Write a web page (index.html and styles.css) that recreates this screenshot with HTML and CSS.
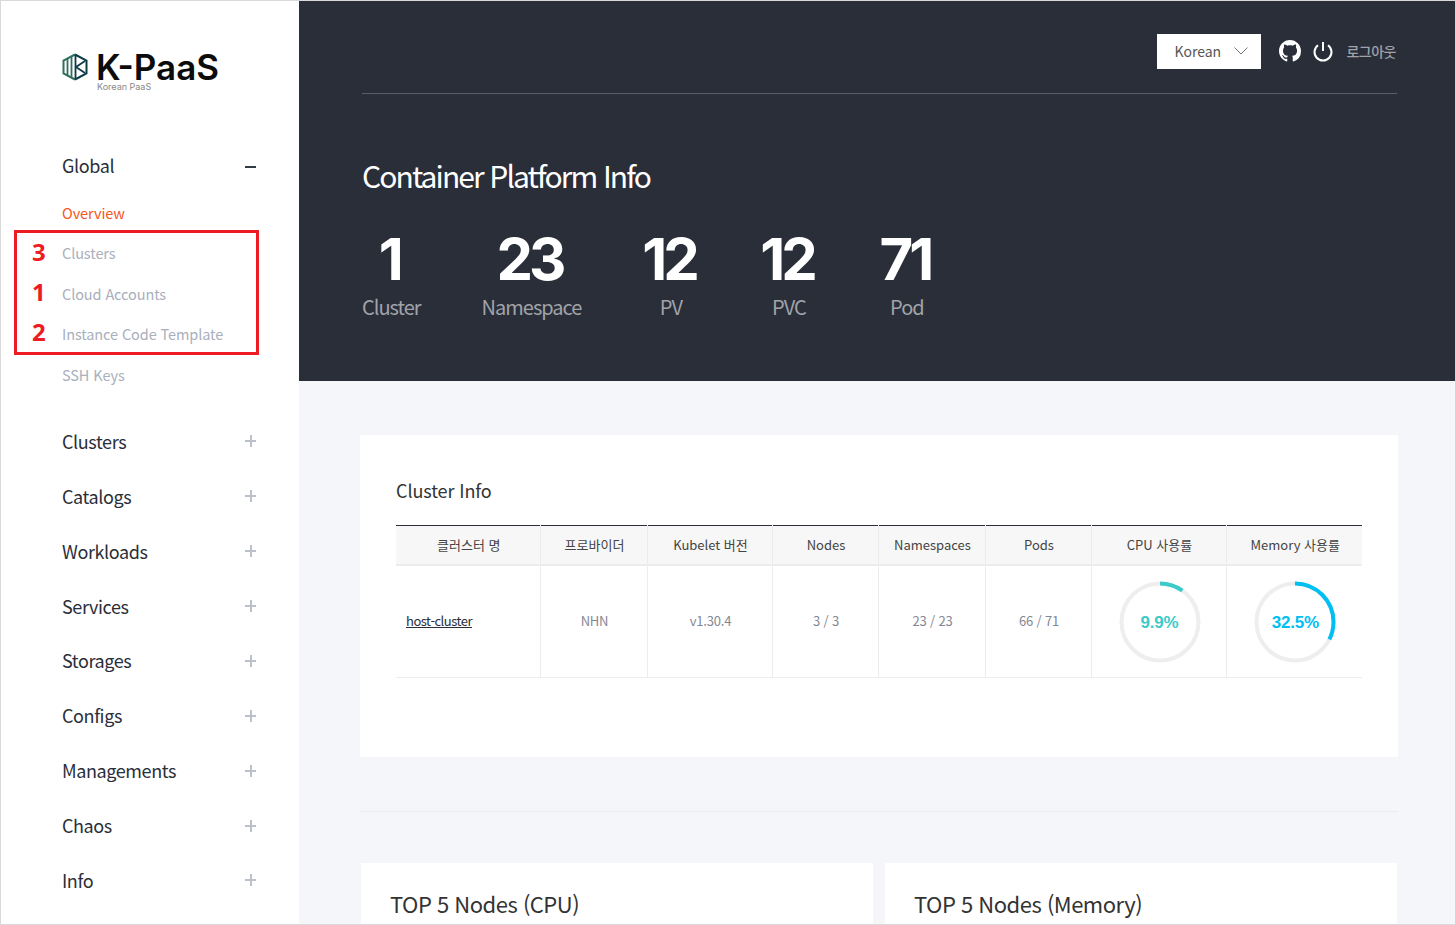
FILE: index.html
```html
<!doctype html>
<html lang="ko">
<head>
    <meta charset="UTF-8">
    <title>K-PaaS Container Platform</title>
    <link rel="stylesheet" href="styles.css">
</head>
<body>
<div class="app">
    <aside class="side">
        <div class="logo">
            <svg class="logo-mark" width="26" height="28" viewBox="0 0 26 28" fill="none">
                <path d="M13 1.500 1.500 7.500v13L13 26.500" stroke="#2f6f5c" stroke-width="2"/>
                <path d="M13 1.500 24.500 7.500v13L13 26.500" stroke="#0f3a48" stroke-width="2"/>
                <path d="M5.500 6v16M9.500 4v20" stroke="#2f6f5c" stroke-width="1.800"/>
                <path d="M13.500 2v24M14 14l9-6M14 14l9 6" stroke="#0f3a48" stroke-width="1.800"/>
            </svg>
            <div class="logo-text">
                <div class="logo-name">K-PaaS</div>
                <div class="logo-sub">Korean PaaS</div>
            </div>
        </div>

        <div class="menu-head"><span>Global</span><i class="tog minus"></i></div>
        <ul class="sub">
            <li class="on">Overview</li>
            <li>Clusters</li>
            <li>Cloud Accounts</li>
            <li>Instance Code Template</li>
            <li>SSH Keys</li>
        </ul>
        <div class="menu-head"><span>Clusters</span><i class="tog plus"></i></div>
        <div class="menu-head"><span>Catalogs</span><i class="tog plus"></i></div>
        <div class="menu-head"><span>Workloads</span><i class="tog plus"></i></div>
        <div class="menu-head"><span>Services</span><i class="tog plus"></i></div>
        <div class="menu-head"><span>Storages</span><i class="tog plus"></i></div>
        <div class="menu-head"><span>Configs</span><i class="tog plus"></i></div>
        <div class="menu-head"><span>Managements</span><i class="tog plus"></i></div>
        <div class="menu-head"><span>Chaos</span><i class="tog plus"></i></div>
        <div class="menu-head"><span>Info</span><i class="tog plus"></i></div>

        <!-- 빨간 표시 -->
        <div class="mark-box">
            <b>3</b>
            <b>1</b>
            <b>2</b>
        </div>
    </aside>

    <main class="main">
        <section class="hero">
            <div class="topbar">
                <div class="lang"><span>Korean</span>
                    <svg width="14" height="8" viewBox="0 0 14 8" fill="none"><path d="M.5.5 7 7 13.500.5" stroke="#777" stroke-width="1"/></svg>
                </div>
                <svg class="ico" width="22" height="22" viewBox="0 0 16 16" fill="#fff"><path d="M8 0C3.580 0 0 3.580 0 8c0 3.540 2.290 6.530 5.470 7.590.4.070.55-.17.55-.38 0-.19-.01-.82-.01-1.490-2.010.37-2.530-.49-2.690-.94-.09-.23-.48-.94-.82-1.130-.28-.15-.68-.52-.01-.53.630-.01 1.080.58 1.230.82.720 1.210 1.870.87 2.330.66.070-.52.280-.87.510-1.070-1.780-.2-3.640-.89-3.640-3.950 0-.87.310-1.590.820-2.150-.08-.2-.36-1.020.08-2.120 0 0 .67-.21 2.200.82.640-.18 1.320-.27 2-.27s1.360.09 2 .27c1.530-1.040 2.200-.82 2.200-.82.440 1.100.160 1.920.08 2.120.51.560.82 1.270.82 2.150 0 3.070-1.870 3.750-3.650 3.950.29.250.54.730.54 1.480 0 1.070-.01 1.930-.01 2.200 0 .21.150.46.550.38A8.010 8.010 0 0 0 16 8c0-4.420-3.580-8-8-8z"/></svg>
                <svg class="ico ico-pw" width="22" height="22" viewBox="0 0 22 22" fill="none"><path d="M11 2v9" stroke="#fff" stroke-width="2"/><path d="M6 5.200a8.500 8.500 0 1 0 10 0" stroke="#fff" stroke-width="2"/></svg>
                <span class="logout">로그아웃</span>
            </div>
            <h1>Container Platform Info</h1>
            <div class="stats">
                <div class="stat"><strong>1</strong><span>Cluster</span></div>
                <div class="stat"><strong>23</strong><span>Namespace</span></div>
                <div class="stat"><strong>12</strong><span>PV</span></div>
                <div class="stat"><strong>12</strong><span>PVC</span></div>
                <div class="stat"><strong>71</strong><span>Pod</span></div>
            </div>
        </section>

        <section class="body">
            <div class="card info">
                <h2>Cluster Info</h2>
                <table>
                    <colgroup>
                        <col class="c1"><col class="c2"><col class="c3"><col class="c4">
                        <col class="c5"><col class="c6"><col class="c7"><col class="c8">
                    </colgroup>
                    <thead>
                        <tr>
                            <th>클러스터 명</th><th>프로바이더</th><th>Kubelet 버전</th><th>Nodes</th>
                            <th>Namespaces</th><th>Pods</th><th>CPU 사용률</th><th>Memory 사용률</th>
                        </tr>
                    </thead>
                    <tbody>
                        <tr>
                            <td class="name"><a>host-cluster</a></td>
                            <td>NHN</td><td>v1.30.4</td><td>3 / 3</td><td>23 / 23</td><td>66 / 71</td>
                            <td class="gauge">
                                <div class="ring green">
                                    <svg width="82" height="82" viewBox="0 0 82 82">
                                        <circle class="track" cx="41" cy="41" r="38.500"/>
                                        <circle class="val" cx="41" cy="41" r="38.500" pathLength="100" stroke-dasharray="9.900 100" transform="rotate(-90 41 41)"/>
                                    </svg>
                                    <span>9.9%</span>
                                </div>
                            </td>
                            <td class="gauge">
                                <div class="ring blue">
                                    <svg width="82" height="82" viewBox="0 0 82 82">
                                        <circle class="track" cx="41" cy="41" r="38.500"/>
                                        <circle class="val" cx="41" cy="41" r="38.500" pathLength="100" stroke-dasharray="32.500 100" transform="rotate(-90 41 41)"/>
                                    </svg>
                                    <span>32.5%</span>
                                </div>
                            </td>
                        </tr>
                    </tbody>
                </table>
            </div>
            <hr class="sep">
            <div class="row">
                <div class="card top"><h3>TOP 5 Nodes (CPU)</h3></div>
                <div class="card top"><h3>TOP 5 Nodes (Memory)</h3></div>
            </div>
        </section>
    </main>
</div>
</body>
</html>
```

FILE: styles.css
```css
*{margin:0;padding:0;box-sizing:border-box;}
html,body{height:100%;overflow:hidden;}
body{
	font-family:"Noto Sans CJK KR","Noto Sans",sans-serif;
	background:#f4f6fa;
	color:#2a2e39;
}
.app{
	display:flex;
	height:925px;
	border:1px solid #d9d9d9;
	border-right:0;
	overflow:hidden;
}

/* 왼쪽 메뉴 */
.side{
	position:relative;
	flex:0 0 298px;
	padding:0 43px 0 61px;
	background:#fff;
}
.logo{
	display:flex;
	align-items:flex-start;
	gap:8px;
	height:137px;
	padding-top:51px;
}
.logo-mark{margin-top:1px;}
.logo-name{
	font-family:"Inter",sans-serif;
	font-size:35px;
	font-weight:600;
	line-height:30px;
	color:#0c0c0c;
}
.logo-sub{
	margin-left:1px;
	font-family:"Inter",sans-serif;
	font-size:9px;
	line-height:10px;
	color:#888;
}
.menu-head{
	display:flex;
	justify-content:space-between;
	align-items:center;
	height:54.900px;
	font-size:18px;
	letter-spacing:-.4px;
	color:#2a2e39;
}
.tog{
	position:relative;
	width:11px;
	height:11px;
}
.tog:before,.plus:after{
	content:"";
	position:absolute;
	left:0;
	top:5px;
	width:11px;
	height:2px;
	background:#bcc0ca;
}
.plus:after{
	left:5px;
	top:0;
	width:2px;
	height:12px;
}
.minus:before{background:#333b47;top:6px;}
.sub{
	list-style:none;
	margin:0 0 18px;
}
.sub li{
	height:40.500px;
	line-height:40.500px;
	font-size:14.500px;
	letter-spacing:-.1px;
	color:#a9afbc;
}
.sub li.on{color:#f5561e;}
.mark-box{
	position:absolute;
	left:13px;
	top:229px;
	width:245px;
	height:125px;
	border:3px solid #ed1c24;
	padding:2px 0 0 15px;
}
.mark-box b{
	display:block;
	height:40px;
	font-family:"Open Sans",sans-serif;
	font-size:24px;
	font-weight:700;
	line-height:34px;
	color:#ed1c24;
}

/* 상단 */
.main{
	flex:1;
	min-width:0;
}
.hero{
	height:380px;
	padding:0 58px 0 63px;
	background:#2a2e39;
}
.topbar{
	display:flex;
	justify-content:flex-end;
	align-items:center;
	height:93px;
	padding:8px 1px 0 0;
	border-bottom:1px solid #5a5e68;
}
.lang{
	display:flex;
	justify-content:space-between;
	align-items:center;
	width:104px;
	height:35px;
	margin-right:18px;
	padding:0 13px 0 17px;
	background:#fff;
	font-size:14px;
	color:#555;
}
.ico-pw{margin-left:11px;}
.logout{
	margin-left:12px;
	font-size:14px;
	font-weight:500;
	letter-spacing:-.5px;
	color:#a0a3a9;
}
h1{
	margin-top:59px;
	font-size:30px;
	font-weight:400;
	line-height:44px;
	letter-spacing:-1.900px;
	color:#fff;
}
.stats{
	display:flex;
	gap:61px;
	margin-top:26px;
}
.stat{
	display:flex;
	flex-direction:column;
	align-items:center;
	min-width:57px;
}
.stat strong{
	margin:0 -3px;
	padding-right:4px;
	font-family:"Inter",sans-serif;
	font-size:58px;
	font-weight:700;
	line-height:72px;
	letter-spacing:-4px;
	color:#fff;
}
.stat span{
	font-size:20px;
	line-height:24px;
	letter-spacing:-1px;
	color:#a0a3a9;
}

/* 본문 */
.body{padding:54px 57px 0 61px;}
.card{background:#fff;}
.info{
	height:322px;
	padding:41px 36px 0;
}
h2{
	font-size:18px;
	font-weight:400;
	line-height:28px;
	letter-spacing:-.1px;
	color:#333;
}
table{
	width:966px;
	margin-top:21px;
	border-collapse:collapse;
	table-layout:fixed;
	border-top:1px solid #2a2e39;
}
.c1{width:144px;}
.c2{width:107px;}
.c3{width:125px;}
.c4{width:106px;}
.c5{width:107px;}
.c6{width:106px;}
.c7{width:135px;}
.c8{width:136px;}
th{
	height:39px;
	padding-left:2px;
	background:#f7f7f7;
	border-left:1px solid #ececec;
	border-bottom:2px solid #ececec;
	font-size:13px;
	font-weight:400;
	color:#444;
}
td{
	height:113px;
	padding:0 0 2px 2px;
	border-left:1px solid #ececec;
	border-bottom:1px solid #ececec;
	text-align:center;
	font-size:13px;
	letter-spacing:-.2px;
	color:#848894;
}
th:first-child,td:first-child{border-left:0;}
td.name{
	padding-left:10px;
	text-align:left;
}
td.name a{
	color:#2a2e39;
	text-decoration:underline;
	letter-spacing:-.5px;
}
td.gauge{padding:2px 0 0 2px;}
.ring{
	position:relative;
	width:82px;
	height:82px;
	margin:0 auto;
}
.ring svg{display:block;}
.ring span{
	position:absolute;
	left:0;
	right:0;
	top:30px;
	font-family:"Liberation Sans",sans-serif;
	font-size:17px;
	font-weight:700;
	line-height:24px;
}
.track,.val{fill:none;stroke-width:4;}
.track{stroke:#eeeeee;}
.green .val{stroke:#3ccbc8;}
.green span{color:#3ccbc8;}
.blue .val{stroke:#00bff3;}
.blue span{color:#00bff3;}
.sep{
	height:1px;
	margin-top:54px;
	border:0;
	background:#eaecf0;
}
.row{
	display:flex;
	gap:12px;
	margin:51px 1px 0;
}
.top{
	flex:0 0 512px;
	height:120px;
	padding:22px 29px;
}
h3{
	font-size:22px;
	font-weight:400;
	line-height:36px;
	letter-spacing:-.5px;
	color:#333;
}
```
